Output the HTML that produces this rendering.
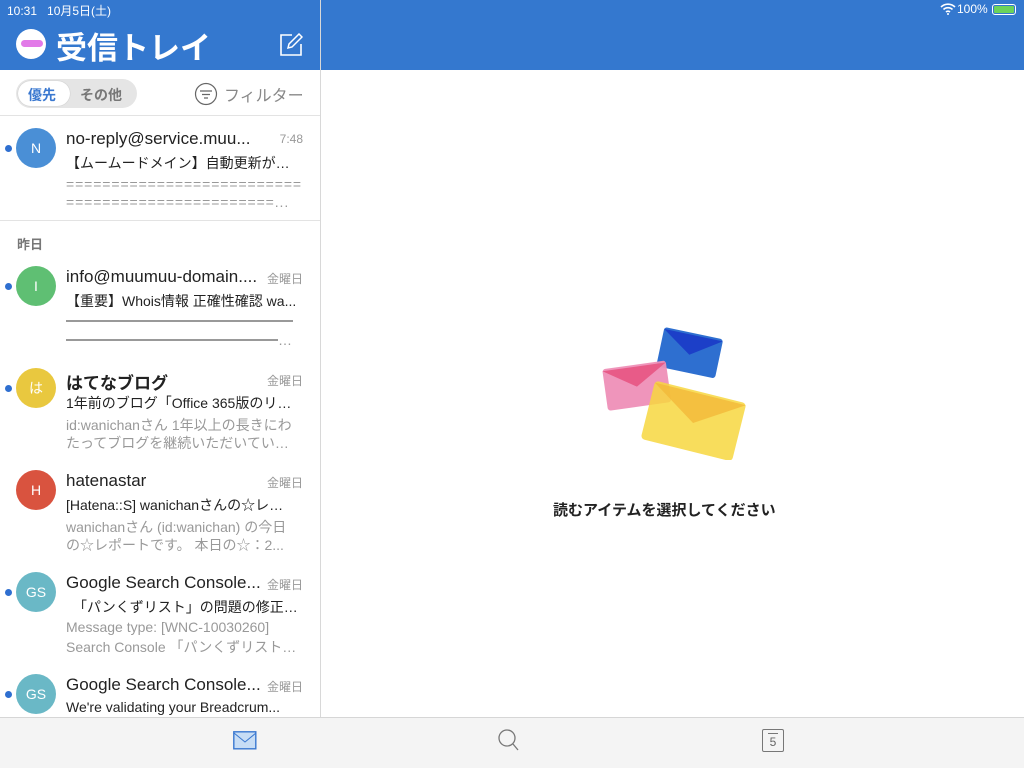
<!DOCTYPE html>
<html><head><meta charset="utf-8"><style>
*{margin:0;padding:0;box-sizing:border-box}
body{width:1024px;height:768px;overflow:hidden;position:relative;background:#fff;font-family:"Liberation Sans","Noto Sans CJK JP",sans-serif;color:#222}
.abs{position:absolute;white-space:nowrap}
.hdr{position:absolute;left:0;top:0;width:1024px;height:70px;background:#3478cf}
.sep{position:absolute;left:320px;top:0;width:1px;height:717px;background:#d8d8d8}
.av{position:absolute;left:16px;width:40px;height:40px;border-radius:50%;color:#fff;font-size:14px;text-align:center;line-height:40px}
.dot{position:absolute;left:5px;width:7px;height:7px;border-radius:50%;background:#2f6fd0}
.snd{position:absolute;left:66px;font-size:17px;color:#222;white-space:nowrap}
.tm{position:absolute;right:721px;font-size:12px;color:#999;white-space:nowrap}
.sub{position:absolute;left:66px;font-size:14px;color:#222;white-space:nowrap}
.pv{position:absolute;left:66px;font-size:14px;color:#999;white-space:nowrap}
</style></head><body>
<div class="hdr"></div>
<div class="sep"></div>
<div class="abs" style="left:7px;top:2px;font-size:12px;color:#fff">10:31&nbsp;&nbsp;&nbsp;10月5日(土)</div>
<div class="abs" style="left:957px;top:2px;font-size:12px;color:#fff">100%</div>
<svg class="abs" style="left:940px;top:3px" width="16" height="12" viewBox="0 0 16 12"><path d="M1 4a10 10 0 0 1 14 0M3.5 6.5a6.5 6.5 0 0 1 9 0M6 9a3 3 0 0 1 4 0" stroke="#fff" stroke-width="1.6" fill="none"/><circle cx="8" cy="11" r="1" fill="#fff"/></svg>
<div class="abs" style="left:992px;top:4px;width:24px;height:11px;border:1px solid #fff;border-radius:3px;padding:1px"><div style="width:100%;height:100%;background:#6bd35b;border-radius:1px"></div></div>
<div class="abs" style="left:16px;top:29px;width:30px;height:30px;border-radius:50%;background:#fff"><div style="position:absolute;left:5px;top:11px;width:22px;height:7px;border-radius:4px;background:#e27ae8"></div></div>
<div class="abs" style="left:56px;top:23px;font-size:31px;font-weight:bold;color:#fff">受信トレイ</div>
<svg class="abs" style="left:279px;top:33px" width="24" height="24" viewBox="0 0 24 24"><path d="M13 2H2v20h20V11" stroke="#fff" stroke-width="1.6" fill="none"/><path d="M9 15l1-4L20 1l3 3-10 10z" stroke="#fff" stroke-width="1.5" fill="none"/></svg>
<div class="abs" style="left:16px;top:79px;width:121px;height:29px;border-radius:15px;background:#e5e5e5"></div>
<div class="abs" style="left:18px;top:81px;width:52px;height:25px;border-radius:13px;background:#fff;box-shadow:0 0 1px #aaa"></div>
<div class="abs" style="left:28px;top:85px;font-size:14px;font-weight:bold;color:#3a78d0">優先</div>
<div class="abs" style="left:80px;top:85px;font-size:14px;font-weight:bold;color:#777">その他</div>
<svg class="abs" style="left:194px;top:82px" width="24" height="24" viewBox="0 0 24 24"><circle cx="12" cy="12" r="10.5" stroke="#666" stroke-width="1.2" fill="none"/><path d="M6 9h12M8 12.5h8M10 16h4" stroke="#666" stroke-width="1.2"/></svg>
<div class="abs" style="left:224px;top:82px;font-size:16px;color:#888">フィルター</div>
<div class="abs" style="left:0;top:115px;width:320px;height:1px;background:#e3e3e3"></div>
<div class="abs" style="left:0;top:220px;width:320px;height:1px;background:#e3e3e3"></div>
<div class="abs" style="left:17px;top:234px;font-size:13px;font-weight:bold;color:#777">昨日</div>

<div class="dot" style="top:145px"></div><div class="av" style="top:128px;background:#4a8fd6">N</div>
<div class="snd" style="top:129px">no-reply@service.muu...</div><div class="tm" style="top:132px">7:48</div>
<div class="sub" style="top:153px">【ムームードメイン】自動更新が…</div>
<div class="pv" style="top:176px;letter-spacing:.9px">==========================</div>
<div class="pv" style="top:194px;letter-spacing:.9px">=======================...</div>

<div class="dot" style="top:283px"></div><div class="av" style="top:266px;background:#5fbf73">I</div>
<div class="snd" style="top:267px">info@muumuu-domain....</div><div class="tm" style="top:270px">金曜日</div>
<div class="sub" style="top:291px">【重要】Whois情報 正確性確認 wa...</div>
<div class="abs" style="left:66px;top:320px;width:227px;height:2px;background:#999"></div>
<div class="abs" style="left:66px;top:339px;width:212px;height:2px;background:#999"></div>
<div class="pv" style="left:278px;top:332px">…</div>

<div class="dot" style="top:385px"></div><div class="av" style="top:368px;background:#e9c83f">は</div>
<div class="snd" style="top:369px;font-weight:bold">はてなブログ</div><div class="tm" style="top:372px">金曜日</div>
<div class="sub" style="top:393px">1年前のブログ「Office 365版のリ…</div>
<div class="pv" style="top:415px">id:wanichanさん 1年以上の長きにわ</div>
<div class="pv" style="top:433px">たってブログを継続いただいてい…</div>

<div class="av" style="top:470px;background:#d9533f">H</div>
<div class="snd" style="top:471px">hatenastar</div><div class="tm" style="top:474px">金曜日</div>
<div class="sub" style="top:495px">[Hatena::S] wanichanさんの☆レ…</div>
<div class="pv" style="top:517px">wanichanさん (id:wanichan) の今日</div>
<div class="pv" style="top:535px">の☆レポートです。 本日の☆：2...</div>

<div class="dot" style="top:589px"></div><div class="av" style="top:572px;background:#6ab8c6">GS</div>
<div class="snd" style="top:573px">Google Search Console...</div><div class="tm" style="top:576px">金曜日</div>
<div class="sub" style="top:597px">　「パンくずリスト」の問題の修正…</div>
<div class="pv" style="top:619px">Message type: [WNC-10030260]</div>
<div class="pv" style="top:637px">Search Console 「パンくずリスト…</div>

<div class="dot" style="top:691px"></div><div class="av" style="top:674px;background:#6ab8c6">GS</div>
<div class="snd" style="top:675px">Google Search Console...</div><div class="tm" style="top:678px">金曜日</div>
<div class="sub" style="top:699px">We're validating your Breadcrum...</div>

<svg class="abs" style="left:598px;top:325px" width="150" height="135" viewBox="0 0 150 135">
<g transform="rotate(12 94 17)"><rect x="64" y="8" width="60" height="40" rx="3" fill="#2e6fd0"/><path d="M64 10l30 20 30-20z" fill="#1c3fc8"/></g>
<g transform="rotate(-8 36 55)"><rect x="6" y="40" width="64" height="42" rx="3" fill="#ee8fb7" opacity=".95"/><path d="M6 42l32 20 32-20z" fill="#e85b88"/></g>
<g transform="rotate(14 96 90)"><rect x="50" y="66" width="94" height="60" rx="4" fill="#f7d740" opacity=".85"/><path d="M50 68l47 30 47-30z" fill="#f2b93a" opacity=".8"/></g>
</svg>
<div class="abs" style="left:553px;top:499px;font-size:15px;font-weight:bold;color:#222">読むアイテムを選択してください</div>

<div class="abs" style="left:0;top:717px;width:1024px;height:51px;background:#f4f4f4;border-top:1px solid #d6d6d6"></div>
<svg class="abs" style="left:233px;top:731px" width="24" height="19" viewBox="0 0 24 19"><rect x=".8" y=".8" width="22" height="17" fill="#c7ddf5" stroke="#3a78d0" stroke-width="1.4"/><path d="M1 2l11 9 11-9" stroke="#3a78d0" stroke-width="1" fill="none"/></svg>
<svg class="abs" style="left:497px;top:728px" width="24" height="24" viewBox="0 0 24 24"><circle cx="10" cy="10" r="8" stroke="#777" stroke-width="1.3" fill="none"/><path d="M16 16l5 6" stroke="#777" stroke-width="1.3"/></svg>
<div class="abs" style="left:762px;top:729px;width:22px;height:23px;border:1.3px solid #777;border-radius:2px;font-size:12px;color:#666;text-align:center;line-height:24px">5</div>
<div class="abs" style="left:768px;top:733px;width:10px;height:1px;background:#777"></div>
</body></html>
